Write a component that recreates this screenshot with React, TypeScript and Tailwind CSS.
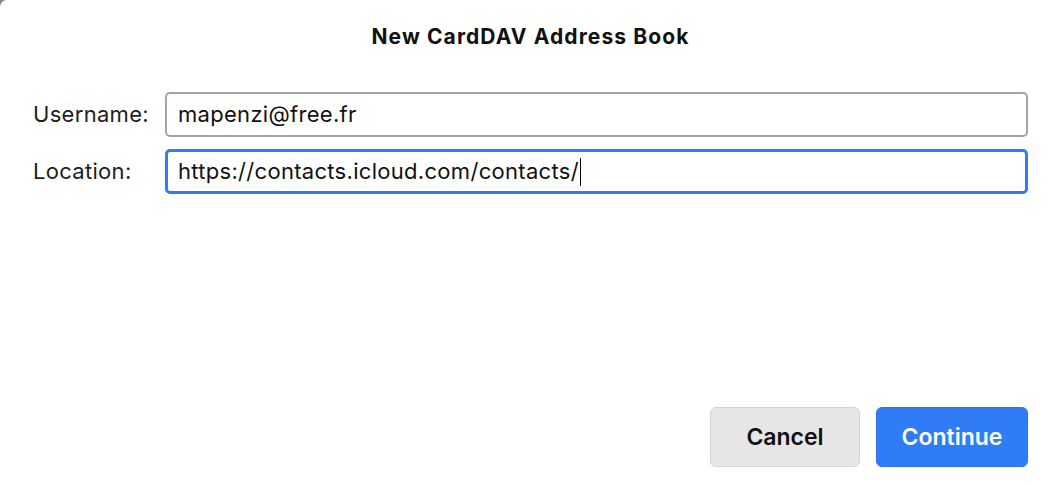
import React from 'react';

const Field: React.FC<{ label: string; value: string; focused?: boolean }> = ({ label, value, focused }) => (
  <div className="flex items-center">
    <label className="w-[132px] shrink-0 text-[22px] tracking-[0.3px] text-[#1d1d1d]">{label}</label>
    <div
      className={`flex-1 flex items-center h-[45px] rounded-[5px] bg-white text-[22px] tracking-[0.3px] text-[#111] ${
        focused ? 'border-[3px] border-[#2f7cf6] px-[10px]' : 'border-2 border-[#a3a3a3] px-[11px]'
      }`}
    >
      <span>{value}</span>
      {focused && <span className="inline-block w-px h-[28px] bg-black ml-[1px]"></span>}
    </div>
  </div>
);

export default function App() {
  return (
    <div className="w-[1055px] h-[485px] bg-[#8a8a8a]" style={{ fontFamily: 'Inter, "Noto Sans", sans-serif' }}>
      <div className="w-full h-full bg-white rounded-tl-[7px] flex flex-col pl-[33px] pr-[27px]">
        {/* Title */}
        <h1 className="pt-[24px] text-center text-[21px] leading-[26px] font-bold tracking-[1.1px] text-[#111]">
          New CardDAV Address Book
        </h1>

        {/* Form */}
        <div className="mt-[42px] flex flex-col gap-[12px]">
          <Field label="Username:" value="mapenzi@free.fr" />
          <Field label="Location:" value="https://contacts.icloud.com/contacts/" focused />
        </div>

        {/* Buttons */}
        <div className="mt-auto mb-[18px] flex justify-end gap-[16px]">
          <button className="w-[150px] h-[60px] rounded-[6px] bg-[#e6e6e6] border border-[#d2d2d2] text-[23px] font-semibold text-[#111]">
            Cancel
          </button>
          <button className="w-[152px] h-[60px] rounded-[6px] bg-[#307cf6] border border-[#2a74ee] text-[23px] font-semibold text-white">
            Continue
          </button>
        </div>
      </div>
    </div>
  );
}
